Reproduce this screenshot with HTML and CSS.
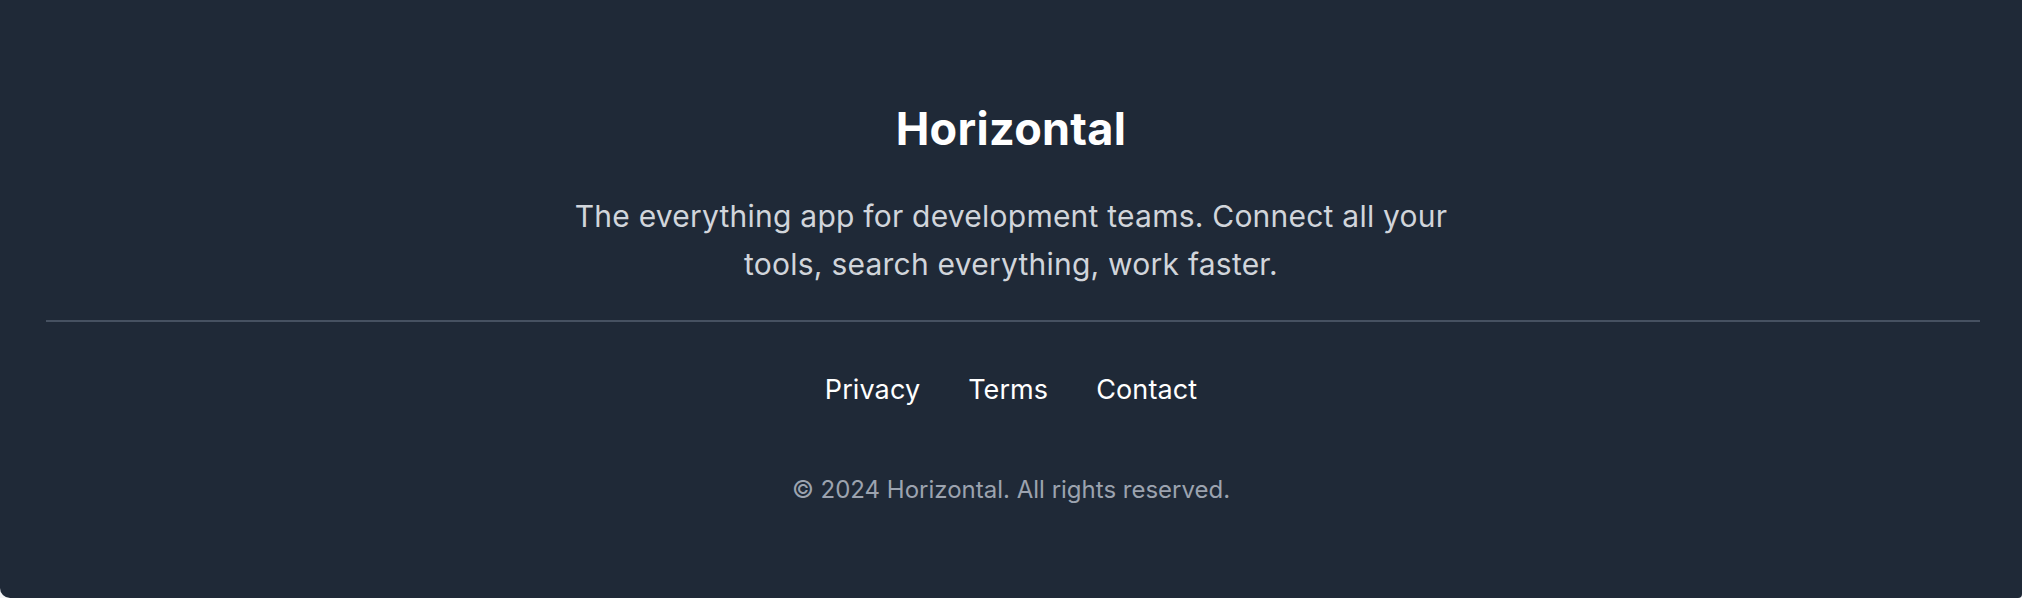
FILE: index.html
```html
<!DOCTYPE html>
<html lang="en">
<head>
<meta charset="utf-8">
<title>Horizontal</title>
<link rel="stylesheet" href="styles.css">
</head>
<body>
<footer class="footer">
  <div class="brand">
    <h2 class="title">Horizontal</h2>
    <p class="tagline">The everything app for development teams. Connect all your tools, search everything, work faster.</p>
  </div>
  <hr class="divider">
  <nav class="links">
    <a href="#" class="link">Privacy</a>
    <a href="#" class="link">Terms</a>
    <a href="#" class="link">Contact</a>
  </nav>
  <p class="copyright">© 2024 Horizontal. All rights reserved.</p>
</footer>
</body>
</html>
```

FILE: styles.css
```css
html, body {
  margin: 0;
  padding: 0;
  height: 100%;
  background: #f3f4f6;
}
body {
  font-family: "Inter", "Noto Sans", "Liberation Sans", sans-serif;
  -webkit-font-smoothing: antialiased;
}
.footer {
  box-sizing: border-box;
  height: 598px;
  background: #1f2937;
  border-radius: 0 0 4px 10px;
  display: flex;
  flex-direction: column;
  align-items: center;
  padding-top: 102px;
}
.brand {
  display: flex;
  flex-direction: column;
  align-items: center;
}
.title {
  margin: 0;
  font-size: 45px;
  line-height: 54px;
  font-weight: 700;
  color: #ffffff;
  letter-spacing: 0.3px;
}
.tagline {
  margin: 36px 0 0;
  max-width: 920px;
  text-align: center;
  font-size: 30px;
  line-height: 48px;
  color: #d1d5db;
  letter-spacing: 0.23px;
}
.divider {
  align-self: stretch;
  margin: 32px 42px 0 46px;
  border: 0;
  height: 2px;
  background: #465161;
}
.links {
  display: flex;
  gap: 48px;
  margin-top: 47px;
}
.link {
  font-size: 27px;
  line-height: 42px;
  color: #ffffff;
  text-decoration: none;
  letter-spacing: 0.1px;
}
.copyright {
  margin: 61px 0 0;
  font-size: 24px;
  line-height: 36px;
  color: #9ca3af;
}
```
